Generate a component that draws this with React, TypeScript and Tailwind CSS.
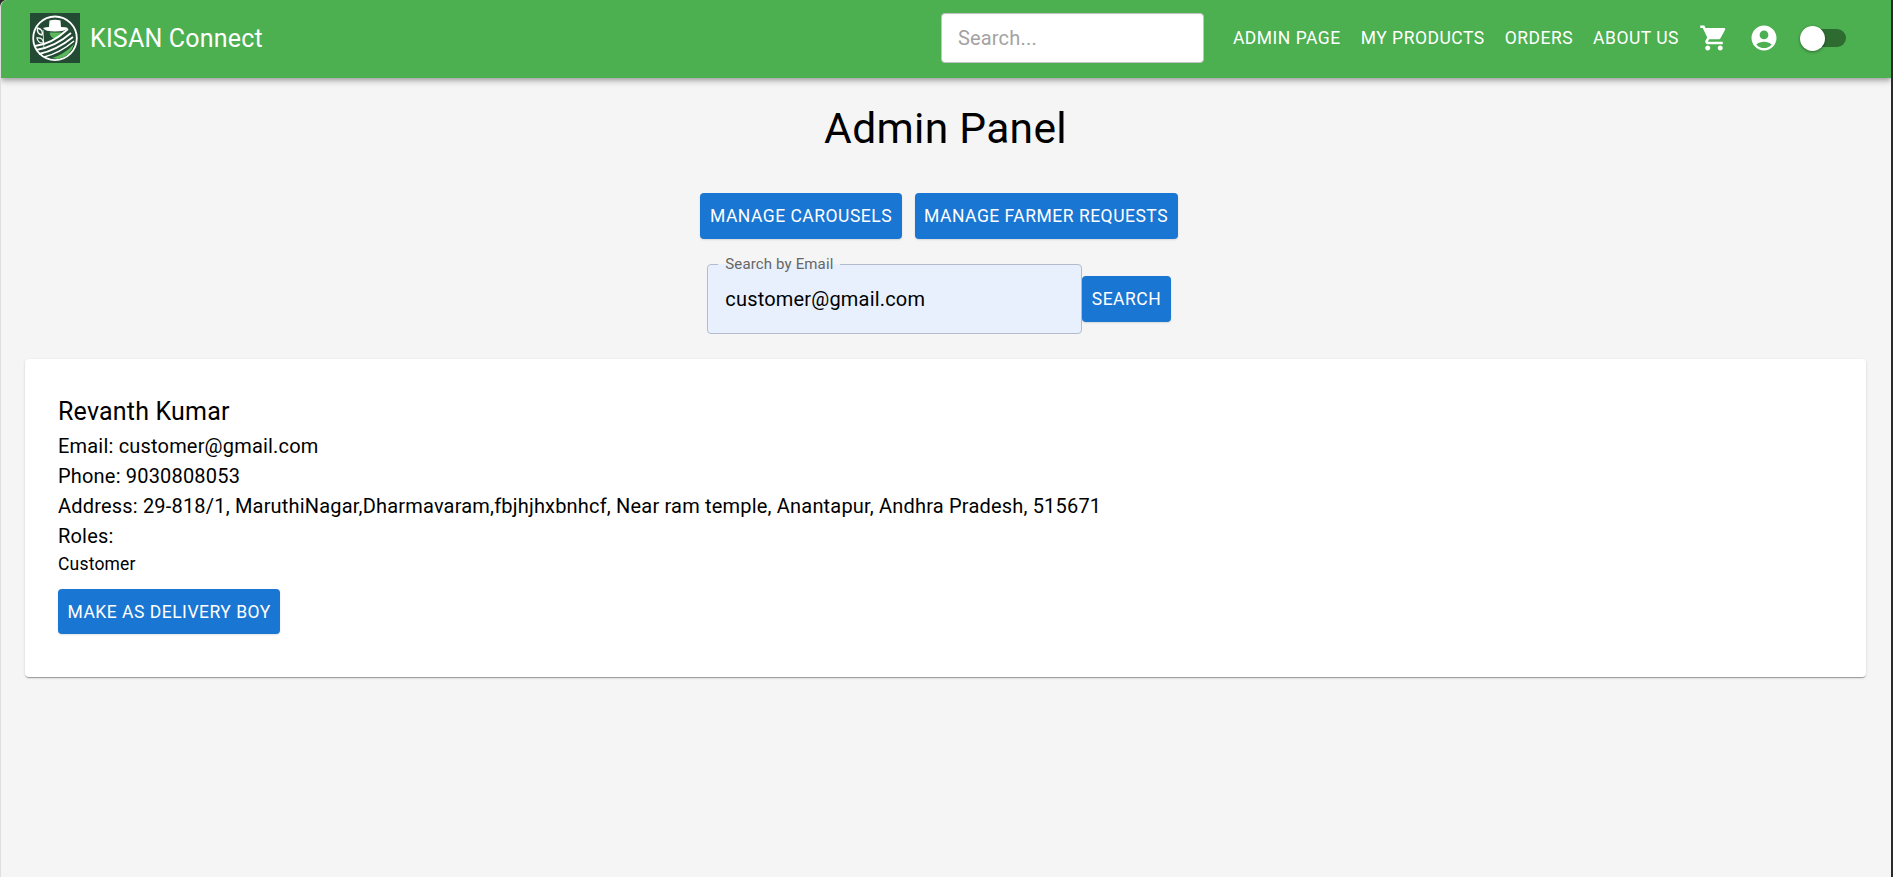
import React from "react";

function Logo() {
  return (
    <svg width="50" height="50" viewBox="0 0 50 50" className="shrink-0">
      <rect width="50" height="50" fill="#234a33" />
      <circle cx="25" cy="25.300" r="21.800" fill="#234a33" stroke="#fff" strokeWidth="1.800" />
      <path d="M19.500 7.500 Q25 6 30.500 7.500 L31 14 Q36 14 38 15 Q35 18.500 25 18.500 Q15 18.500 13 15 Q16 14 19 14 z" fill="#fff" />
      <path d="M19.500 19.500 h12 q-1 6-6 6 q-5 0-6-6 z" fill="#5cb85c" />
      <path d="M7.500 15 q6 1.500 4.500 7 q-5.500-1-4.500-7 z M7 25 q6-.500 6.500 5 q-5.500 .500-6.500-5 z" fill="#234a33" stroke="#fff" strokeWidth="1.300" />
      <path d="M13 17 L14 36" fill="none" stroke="#fff" strokeWidth="0.800" />
      <path d="M5 33 Q22 31 38 16" fill="none" stroke="#fff" strokeWidth="1.800" />
      <path d="M6 37 Q25 34 41 20" fill="none" stroke="#fff" strokeWidth="1.800" />
      <path d="M9 41 Q27 37 43 24" fill="none" stroke="#fff" strokeWidth="1.800" />
      <path d="M14 44 Q30 40 44 28" fill="none" stroke="#fff" strokeWidth="1.500" />
      <path d="M22 45 Q35 41 44 31 Q41 43 28 46 z" fill="#5cb85c" />
    </svg>
  );
}

function Cart() {
  return (
    <svg width="30" height="30" viewBox="0 0 24 24" fill="#fff" className="shrink-0">
      <path d="M7 18c-1.100 0-1.990.900-1.990 2S5.900 22 7 22s2-.900 2-2-.900-2-2-2zM1 2v2h2l3.600 7.590-1.350 2.450c-.160.280-.250.610-.250.960 0 1.100.900 2 2 2h12v-2H7.420c-.140 0-.250-.110-.250-.250l.030-.120.900-1.630h7.450c.750 0 1.410-.410 1.750-1.030l3.580-6.490c.080-.140.120-.310.120-.480 0-.550-.450-1-1-1H5.210l-.940-2H1zm16 16c-1.100 0-1.990.900-1.990 2s.890 2 1.990 2 2-.900 2-2-.900-2-2-2z" />
    </svg>
  );
}

function Account() {
  return (
    <svg width="30" height="30" viewBox="0 0 24 24" fill="#fff" className="shrink-0">
      <path d="M12 2C6.480 2 2 6.480 2 12s4.480 10 10 10 10-4.480 10-10S17.520 2 12 2zm0 4c1.930 0 3.500 1.570 3.500 3.500S13.930 13 12 13s-3.500-1.570-3.500-3.500S10.070 6 12 6zm0 14c-2.030 0-4.430-.820-6.140-2.880C7.550 15.800 9.680 15 12 15s4.450.800 6.140 2.120C16.430 19.180 14.030 20 12 20z" />
    </svg>
  );
}

function Btn({ children, className = "" }: { children: React.ReactNode; className?: string }) {
  return (
    <button className={"h-[46px] shrink-0 rounded-[4px] bg-[#1976d2] px-[9.5px] text-[17.5px] leading-[45px] font-normal tracking-[0.5px] text-white shadow-[0_1px_2px_rgba(0,0,0,0.12)] " + className}>
      {children}
    </button>
  );
}

function NavLink({ children }: { children: React.ReactNode }) {
  return <span className="text-[17.5px] leading-[26px] font-normal tracking-[0.5px] whitespace-nowrap text-white">{children}</span>;
}

export default function App() {
  return (
    <div className="h-[877px] overflow-hidden bg-[#2b2b2b] pr-[2px] font-['Roboto',sans-serif] text-black">
      <div className="h-full overflow-hidden rounded-tl-[7px] border-l border-[#dedede] bg-[#f5f5f5]">
        <header className="flex h-[78px] items-center bg-[#4caf50] pr-[45px] pb-[2px] pl-[29px] shadow-[0_2px_4px_-1px_rgba(0,0,0,0.2),0_4px_5px_0_rgba(0,0,0,0.14),0_1px_10px_0_rgba(0,0,0,0.12)]">
          <Logo />
          <span className="ml-[10px] text-[25px] leading-none font-normal tracking-[0.19px] text-white">KISAN Connect</span>
          <div className="ml-auto flex h-[50px] w-[263px] items-center rounded-[4px] border border-[#c4c4c4] bg-white pl-[16px] text-[20px] tracking-[0.1875px] text-[#a3a3a3]">
            Search...
          </div>
          <div className="ml-[29px] flex items-center gap-[20px]">
            <NavLink>ADMIN PAGE</NavLink>
            <NavLink>MY PRODUCTS</NavLink>
            <NavLink>ORDERS</NavLink>
            <NavLink>ABOUT US</NavLink>
          </div>
          <div className="ml-[20px] flex items-center gap-[20px]">
            <Cart />
            <Account />
          </div>
          <div className="relative ml-[21px] h-[18px] w-[46px] rounded-full bg-[#2e6b31]">
            <span className="absolute top-[-3px] left-0 h-[25px] w-[25px] rounded-full bg-white shadow-[0_1px_3px_rgba(0,0,0,0.4)]" />
          </div>
        </header>

        <main className="pr-[25px] pl-[24px]">
          <h1 className="mt-[21px] text-center text-[42.5px] leading-[60px] font-normal tracking-[0.31px]">Admin Panel</h1>
          <div className="mt-[34px] flex justify-center gap-[13px] pr-[13px]">
            <Btn>MANAGE CAROUSELS</Btn>
            <Btn>MANAGE FARMER REQUESTS</Btn>
          </div>
          <div className="mt-[25px] flex items-center justify-center pr-[13px]">
            <div className="relative flex h-[70px] w-[375px] items-center rounded-[4px] border border-[#b3bccf] bg-[#e8f0fe] pl-[17px] text-[20px] tracking-[0.1875px]">
              <span className="absolute top-[-9px] left-[10px] bg-[linear-gradient(#f5f5f5_50%,#e8f0fe_50%)] px-[7px] text-[15px] leading-[16px] tracking-[0.14px] text-[#666]">Search by Email</span>
              customer@gmail.com
            </div>
            <Btn>SEARCH</Btn>
          </div>
          <section className="mt-[25px] h-[318px] rounded-[4px] bg-white px-[33px] pt-[33px] shadow-[0_2px_1px_-1px_rgba(0,0,0,0.2),0_1px_1px_0_rgba(0,0,0,0.14),0_1px_3px_0_rgba(0,0,0,0.12)]">
            <h2 className="text-[25px] leading-[39px] font-normal tracking-[0.19px]">Revanth Kumar</h2>
            <p className="text-[20px] leading-[30px] tracking-[0.1875px]">Email: customer@gmail.com</p>
            <p className="text-[20px] leading-[30px] tracking-[0.1875px]">Phone: 9030808053</p>
            <p className="text-[20px] leading-[30px] tracking-[0.1875px]">Address: 29-818/1, MaruthiNagar,Dharmavaram,fbjhjhxbnhcf, Near ram temple, Anantapur, Andhra Pradesh, 515671</p>
            <p className="text-[20px] leading-[30px] tracking-[0.1875px]">Roles:</p>
            <p className="text-[17.5px] leading-[26px] tracking-[0.19px]">Customer</p>
            <Btn className="mt-[12px] !h-[45px] !leading-[44px]">MAKE AS DELIVERY BOY</Btn>
          </section>
        </main>
      </div>
    </div>
  );
}
